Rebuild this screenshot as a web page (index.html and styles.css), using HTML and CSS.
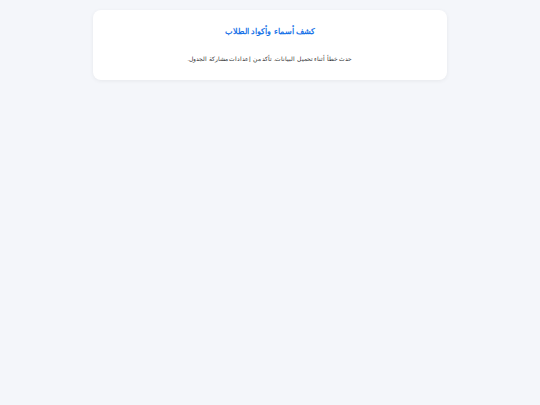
FILE: index.html
```html
<!DOCTYPE html>
<html lang="ar" dir="rtl">
<head>
<meta charset="utf-8">
<title>كشف أسماء وأكواد الطلاب</title>
<link rel="stylesheet" href="styles.css">
</head>
<body>
<div class="page">
  <div class="card">
    <h1 class="title">كشف أسماء وأكواد الطلاب</h1>
    <p class="message">حدث خطأ أثناء تحميل البيانات. تأكد من إعدادات مشاركة الجدول.</p>
  </div>
</div>
</body>
</html>
```

FILE: styles.css
```css
html, body {
  margin: 0;
  padding: 0;
  background: #f4f6fa;
  font-family: "Liberation Sans", sans-serif;
}
.page {
  padding: 10px;
  display: flex;
  justify-content: center;
}
.card {
  width: 354px;
  box-sizing: border-box;
  background: #ffffff;
  border-radius: 8px;
  box-shadow: 0 1px 4px rgba(0, 0, 0, 0.06);
  padding: 15px 20px 16px;
  text-align: center;
}
.title {
  margin: 0 0 15px;
  font-size: 8px;
  font-weight: bold;
  color: #1a73e8;
  line-height: 14px;
}
.message {
  margin: 0;
  font-size: 5.5px;
  color: #333333;
  line-height: 10px;
}
```
